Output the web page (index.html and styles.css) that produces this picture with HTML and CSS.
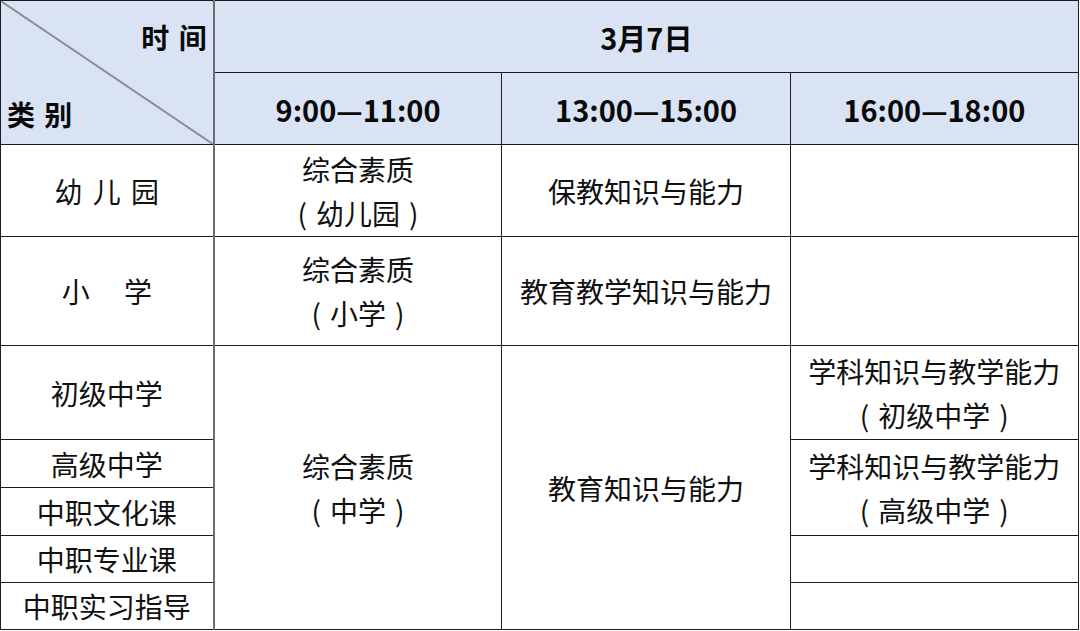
FILE: index.html
```html
<!DOCTYPE html>
<html lang="zh-CN">
<head>
<meta charset="utf-8">
<title>考试时间安排</title>
<link rel="stylesheet" href="styles.css">
</head>
<body>
<table class="schedule">
  <colgroup>
    <col class="c-cat">
    <col class="c-slot">
    <col class="c-slot">
    <col class="c-slot">
  </colgroup>
  <thead>
    <tr class="h1">
      <th rowspan="2" class="corner">
        <div class="corner-box">
          <span class="corner-time">时 间</span>
          <span class="corner-cat">类 别</span>
        </div>
      </th>
      <th colspan="3" class="date">3月7日</th>
    </tr>
    <tr class="h2">
      <th class="slot">9:00—11:00</th>
      <th class="slot">13:00—15:00</th>
      <th class="slot">16:00—18:00</th>
    </tr>
  </thead>
  <tbody>
    <tr class="r-kg">
      <td class="cat spaced">幼 儿 园</td>
      <td>综合素质<br><span class="p">(</span>幼儿园<span class="p">)</span></td>
      <td>保教知识与能力</td>
      <td></td>
    </tr>
    <tr class="r-pri">
      <td class="cat">小&emsp;&nbsp;学</td>
      <td>综合素质<br><span class="p">(</span>小学<span class="p">)</span></td>
      <td>教育教学知识与能力</td>
      <td></td>
    </tr>
    <tr class="r-jr">
      <td class="cat">初级中学</td>
      <td rowspan="6">综合素质<br><span class="p">(</span>中学<span class="p">)</span></td>
      <td rowspan="6">教育知识与能力</td>
      <td>学科知识与教学能力<br><span class="p">(</span>初级中学<span class="p">)</span></td>
    </tr>
    <tr class="r-sm">
      <td class="cat">高级中学</td>
      <td rowspan="2">学科知识与教学能力<br><span class="p">(</span>高级中学<span class="p">)</span></td>
    </tr>
    <tr class="r-sm">
      <td class="cat">中职文化课</td>
    </tr>
    <tr class="r-xs">
      <td class="cat">中职专业课</td>
      <td></td>
    </tr>
    <tr class="r-xs">
      <td class="cat">中职实习指导</td>
      <td></td>
    </tr>
  </tbody>
</table>
</body>
</html>
```
FILE: styles.css
```css
html, body {
  margin: 0;
  padding: 0;
  background: #ffffff;
}

body {
  font-family: "Noto Sans CJK SC", "Noto Sans", sans-serif;
  color: #111111;
}

.schedule {
  border-collapse: collapse;
  table-layout: fixed;
  width: 1079px;
  border: 1.5px solid #111111;
}

.c-cat { width: 213px; }
.c-slot { width: 288px; }

.schedule th,
.schedule td {
  border: 1px solid #1c1c1c;
  padding: 0;
  text-align: center;
  vertical-align: middle;
  font-size: 28px;
  line-height: 44px;
  font-weight: 400;
}

.schedule td.cat {
  border-right: 2px solid #6e6e6e;
}

.spaced {
  word-spacing: 4px;
}

.p {
  display: inline-block;
  padding: 0 9px;
}

.schedule thead th {
  background: #dae3f3;
  font-weight: 700;
  color: #0a0a0a;
}

.schedule thead th.corner {
  border-right: 2px solid #6e6e6e;
  background:
    linear-gradient(to top right,
      transparent calc(50% - 1px),
      #3a3a3a 50%,
      transparent calc(50% + 1px)),
    #dae3f3;
}

.corner-box {
  height: 143px;
  display: flex;
  flex-direction: column;
  justify-content: space-between;
  padding: 16px 6px 10px 6px;
  box-sizing: border-box;
  line-height: 40px;
  word-spacing: 3px;
}

.corner-time { align-self: flex-end; }
.corner-cat { align-self: flex-start; }

.schedule th.date,
.schedule th.slot {
  font-size: 29px;
}

.h1 { height: 72px; }
.h2 { height: 72px; }
.r-kg { height: 92px; }
.r-pri { height: 109px; }
.r-jr { height: 94px; }
.r-sm { height: 48px; }
.r-xs { height: 47px; }
```
